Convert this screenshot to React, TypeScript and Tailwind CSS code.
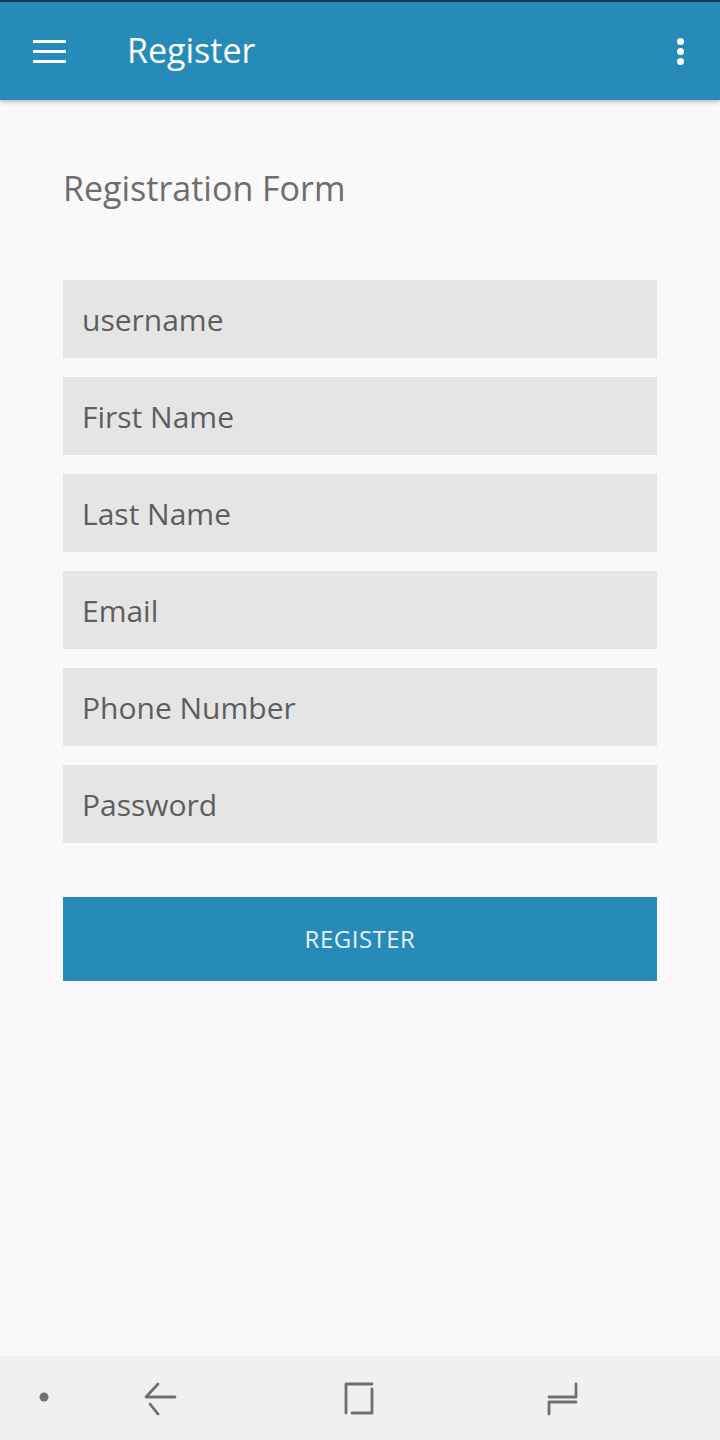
import React from 'react';

const fields = ['username', 'First Name', 'Last Name', 'Email', 'Phone Number', 'Password'];

const App = () => {
  return (
    <div className="w-[720px] h-[1440px] bg-[#f9f9f9] flex flex-col overflow-hidden" style={{ fontFamily: '"Open Sans", "Noto Sans", sans-serif' }}>
      {/* Status line */}
      <div className="h-[2px] bg-[#1d3b57]" />

      {/* App bar */}
      <header className="h-[98px] bg-[#278bb9] flex items-center shadow-[0_2px_4px_rgba(0,0,0,0.25)] relative z-10">
        <div className="w-[127px] pl-[33px] flex flex-col gap-[7px]">
          <span className="block w-[33px] h-[3px] bg-white" />
          <span className="block w-[33px] h-[3px] bg-white" />
          <span className="block w-[33px] h-[3px] bg-white" />
        </div>
        <h1 className="flex-1 text-white text-[34px] leading-none pb-[2px]">Register</h1>
        <div className="pr-[36px] flex flex-col gap-[3px] items-center">
          <span className="block w-[7px] h-[7px] rounded-full bg-white" />
          <span className="block w-[7px] h-[7px] rounded-full bg-white" />
          <span className="block w-[7px] h-[7px] rounded-full bg-white" />
        </div>
      </header>

      {/* Form */}
      <main className="flex-1 px-[63px]">
        <h2 className="mt-[66px] text-[34px] leading-[44px] text-[#6d6d6d]">Registration Form</h2>
        <div className="mt-[70px] flex flex-col gap-[19px]">
          {fields.map((f) => (
            <div key={f} className="h-[78px] bg-[#e5e5e5] flex items-center px-[19px] text-[30px] font-medium text-[#5e5e5e]">
              {f}
            </div>
          ))}
        </div>
        <button className="mt-[54px] w-full h-[84px] bg-[#278bb9] text-[#e3f1f8] text-[24px] tracking-[0.5px]">
          REGISTER
        </button>
      </main>

      {/* Navigation bar */}
      <nav className="h-[84px] bg-[#f0f0f0] flex items-center relative">
        <svg width="720" height="84" viewBox="0 0 720 84" className="block">
          <circle cx="44" cy="41" r="4.5" fill="#6f6f6f" />
          <g stroke="#6f6f6f" strokeWidth="2.8" fill="none" strokeLinecap="round" strokeLinejoin="round">
            <path d="M158 28 L146 41 L175 41" />
            <path d="M150 48 L158 58" />
            <path d="M346 57 L346 28 L372 28" />
            <path d="M352 57 L372 57 L372 33" />
            <path d="M576 28 L576 41 L549 41" />
            <path d="M549 58 L549 46 L576 46" />
          </g>
        </svg>
      </nav>
    </div>
  );
};

export default App;
